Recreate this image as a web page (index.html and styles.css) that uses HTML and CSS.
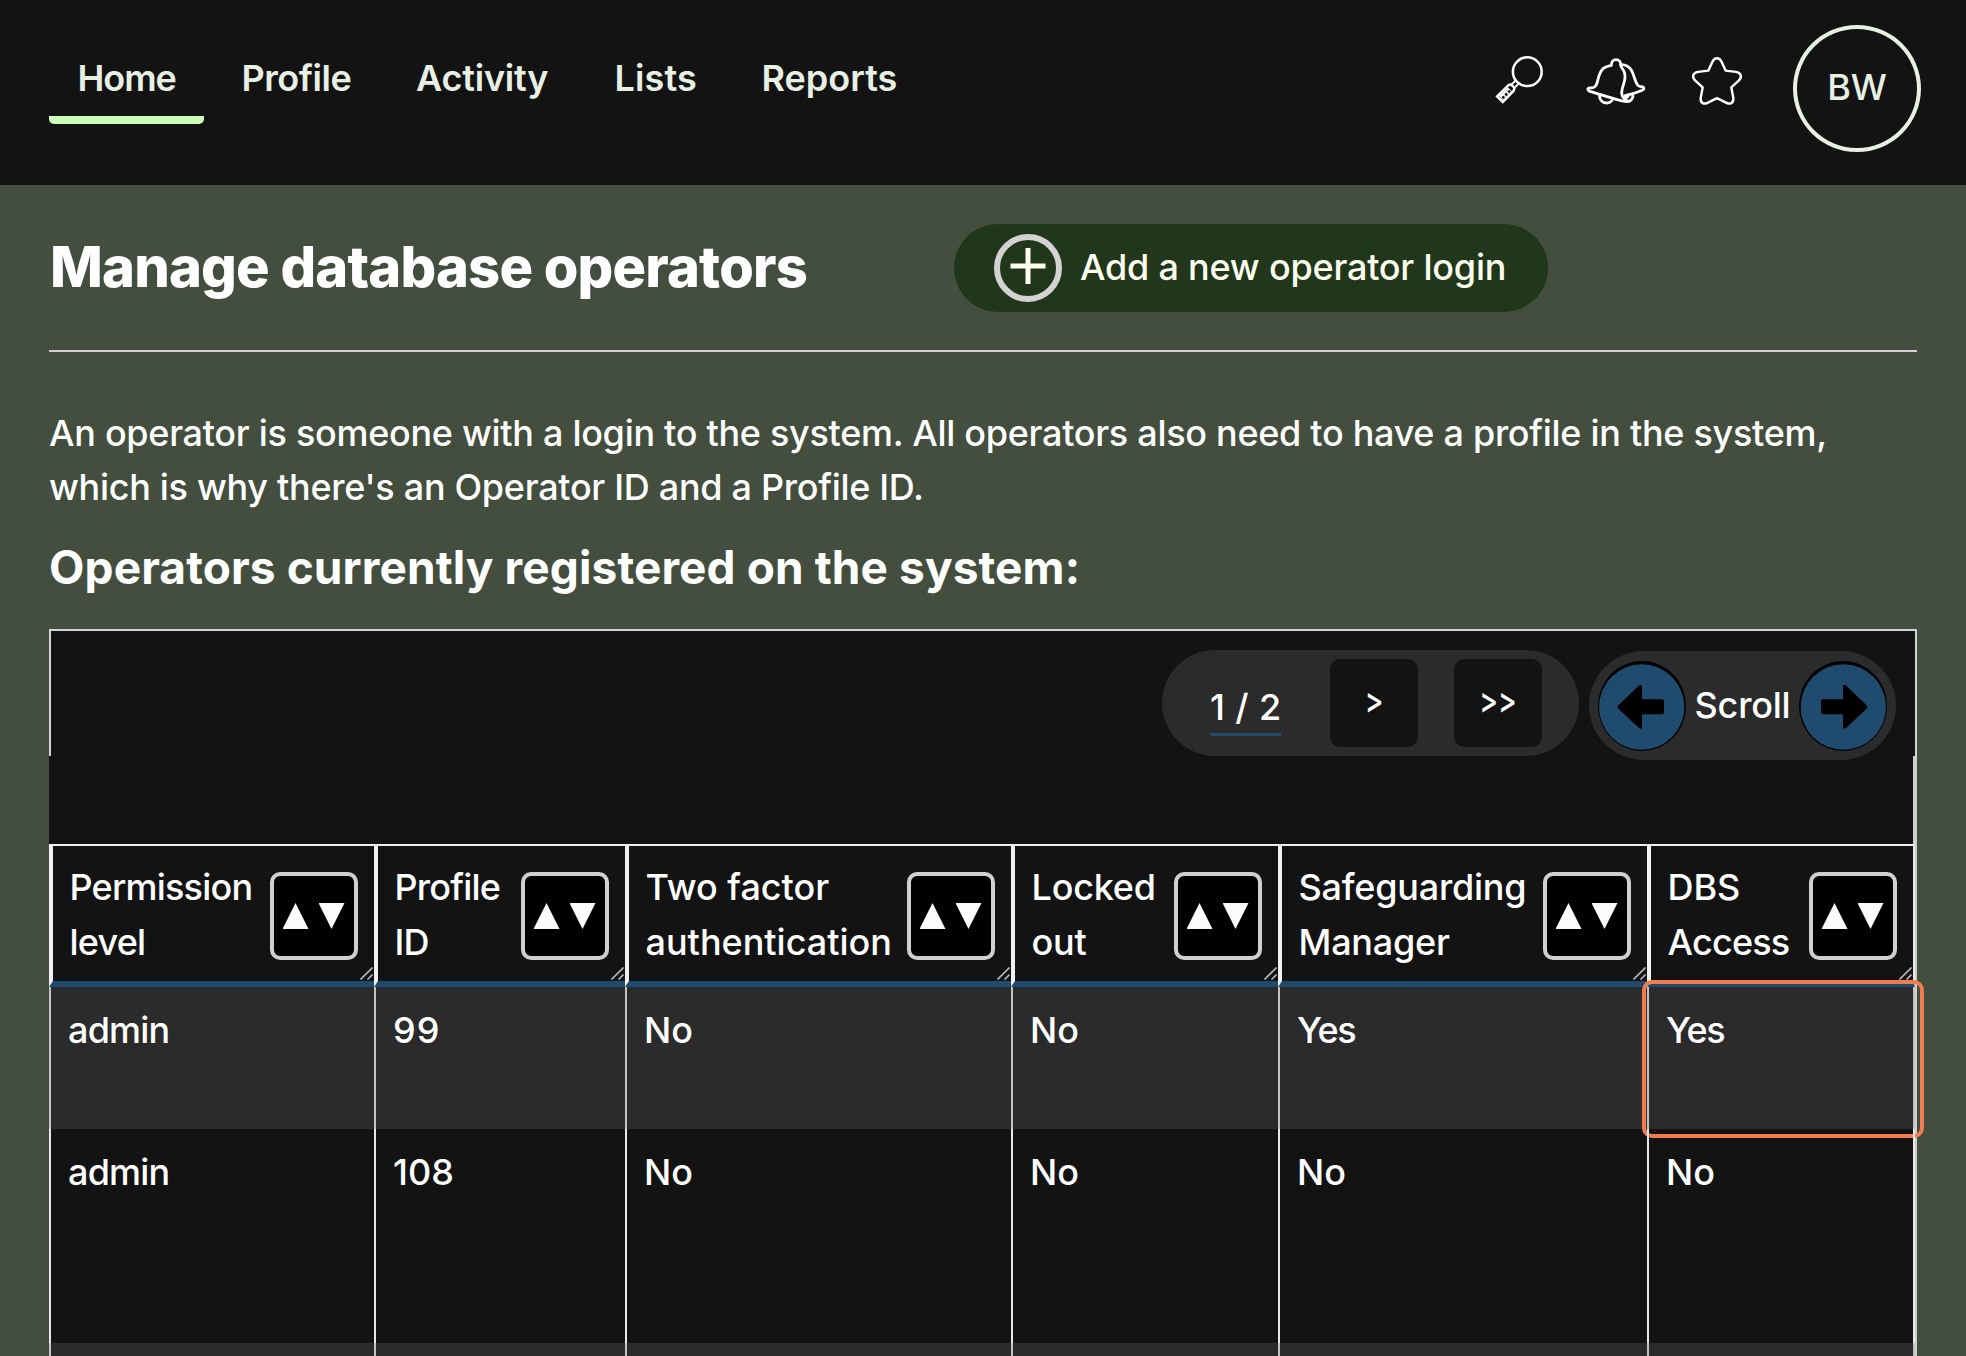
FILE: index.html
```html
<!DOCTYPE html>
<html lang="en">
<head>
<meta charset="utf-8">
<title>Manage database operators</title>
<link rel="stylesheet" href="styles.css">
</head>
<body>
<header class="topbar">
  <nav class="nav">
    <a class="tab tab-active t-home">Home</a>
    <a class="tab t-wide">Profile</a>
    <a class="tab t-activity">Activity</a>
    <a class="tab t-lists">Lists</a>
    <a class="tab">Reports</a>
  </nav>
  <div class="tools">
    <svg class="icon icon-search" viewBox="0 0 52 60" fill="none" stroke="#fff" stroke-width="2.5">
      <circle cx="33.3" cy="19.7" r="14.4"/>
      <path d="M3.2 44.4 L14.8 32.8 L17 32.4 L20.5 36 L19.6 38.9 L8.8 49.9 Z"/>
      <path d="M18 32.2 L22 28 M21.2 35.2 L25 31.2" stroke-width="1.9"/>
      <path d="M7 46 L15.8 37.2" stroke-width="5.6"/>
      <path d="M9.3 43.5 l1.8 1.8 l-1.8 1.8 l-1.8 -1.8 Z M12.2 40.6 l1.8 1.8 l-1.8 1.8 l-1.8 -1.8 Z M15.1 37.7 l1.8 1.8 l-1.8 1.8 l-1.8 -1.8 Z" fill="#131313" stroke="none"/>
    </svg>
    <svg class="icon icon-bell" viewBox="0 0 62 60" fill="none" stroke="#fff" stroke-width="2.8" stroke-linecap="round" stroke-linejoin="round">
      <path d="M26.3 13.4 C26.3 9.8 28.2 7.7 31 7.7 C34 7.7 35.8 9.8 35.8 12.7 C35.4 15.5 38 16.4 39.3 20 C41.6 26 38.6 31.5 37.3 36.5 C36.2 41 36.4 43.5 38.3 45.5 C39.5 47 41.2 47.8 42.3 49.6 C37 49.7 30 46.8 22 44.6 L5 39.4 C2 38.2 2.3 35.8 5.2 35.9 C9.5 36 11 34.5 12.2 30.5 C13.6 25.5 14 21.5 17 17.8 C19.3 15 22.5 14.3 26.3 13.4 Z"/>
      <path d="M35.6 12.6 C40 12.4 44 14.4 46.3 18 C49.3 23 49.5 29 52.6 33 C54.2 35 56.3 34.2 58 35 C59.5 36 59 37.6 57.3 38.3 C51.5 40.8 46 42.6 40 43.7"/>
      <path d="M14.4 42.6 C14.3 48 17.5 51 21.5 51 C24.6 51 26.8 49.6 28 46.8 M47.6 41.9 C48.8 45 46.5 49.4 42.3 49.6 M39.3 45.7 C41 46.2 43 45.5 43.7 42.9"/>
    </svg>
    <svg class="icon icon-star" viewBox="0 0 54 60" fill="none" stroke="#fff" stroke-width="2.4" stroke-linejoin="round">
      <path d="M27 6.3 C29 6.3 30.6 7.7 31.7 10 L35.6 18.6 L46 19.9 C51.4 20.9 52.4 25 48.7 28.6 L41.3 35.3 L43.3 46 C43.8 50.8 40.4 52.7 36.5 50.8 L27 46.1 L17.5 50.8 C13.6 52.7 10.2 50.8 10.7 46 L12.7 35.3 L5.3 28.6 C1.6 25 2.6 20.9 8 19.9 L18.4 18.6 L22.3 10 C23.4 7.7 25 6.3 27 6.3 Z"/>
    </svg>
    <div class="avatar">BW</div>
  </div>
</header>

<main class="page">
  <div class="title-row">
    <h1>Manage database operators</h1>
    <button class="add">
      <span class="ring"><svg class="plus" viewBox="0 0 36 36" stroke="#fffff0" stroke-width="5"><path d="M18 0V36M0.5 18H35.5"/></svg></span>
      <span class="add-text">Add a new operator login</span>
    </button>
  </div>
  <hr>
  <p class="intro">An operator is someone with a login to the system. All operators also need to have a profile in the system,<br>which is why there's an Operator ID and a Profile ID.</p>
  <h2>Operators currently registered on the system:</h2>

  <div class="toolbar">
    <div class="pager">
      <span class="count">1 / 2</span>
      <button class="page-btn"><span class="chev">&gt;</span></button>
      <button class="page-btn"><span class="chev">&gt;&gt;</span></button>
    </div>
    <div class="scroll">
      <button class="disc"><svg viewBox="0 0 88 90"><circle cx="43.7" cy="46" r="42.7" fill="#1e4b6e"/><path d="M20.7 44 L41 24.5 Q44 22.5 44 26 V38.3 H64 Q66 38.3 66 40.3 V51.3 Q66 53.3 64 53.3 H44 V65.5 Q44 69 41 67 L20.7 48 Q18.5 46 20.7 44 Z"/></svg></button>
      <span class="scroll-text">Scroll</span>
      <button class="disc"><svg viewBox="0 0 88 90"><circle cx="44.3" cy="46" r="42.7" fill="#1e4b6e"/><path d="M67.3 44 L47 24.5 Q44 22.5 44 26 V38.3 H24 Q22 38.3 22 40.3 V51.3 Q22 53.3 24 53.3 H44 V65.5 Q44 69 47 67 L67.3 48 Q69.5 46 67.3 44 Z"/></svg></button>
    </div>
  </div>
  <div class="spacer"></div>

  <div class="grid">
    <div class="row head">
      <div class="cell"><span class="tighter">Permission<br>level</span><button class="sort"><i class="up"></i><i class="down"></i></button><svg class="grip" viewBox="0 0 13 13"><path d="M0.5 12.5L12.5 0.5M7.5 12.5L12.5 7.5"/></svg></div>
      <div class="cell"><span class="tighter">Profile<br>ID</span><button class="sort"><i class="up"></i><i class="down"></i></button><svg class="grip" viewBox="0 0 13 13"><path d="M0.5 12.5L12.5 0.5M7.5 12.5L12.5 7.5"/></svg></div>
      <div class="cell"><span>Two factor<br>authentication</span><button class="sort"><i class="up"></i><i class="down"></i></button><svg class="grip" viewBox="0 0 13 13"><path d="M0.5 12.5L12.5 0.5M7.5 12.5L12.5 7.5"/></svg></div>
      <div class="cell"><span class="tight">Locked<br>out</span><button class="sort"><i class="up"></i><i class="down"></i></button><svg class="grip" viewBox="0 0 13 13"><path d="M0.5 12.5L12.5 0.5M7.5 12.5L12.5 7.5"/></svg></div>
      <div class="cell"><span class="tight">Safeguarding<br>Manager</span><button class="sort"><i class="up"></i><i class="down"></i></button><svg class="grip" viewBox="0 0 13 13"><path d="M0.5 12.5L12.5 0.5M7.5 12.5L12.5 7.5"/></svg></div>
      <div class="cell"><span>DBS<br><span class="tighter">Access</span></span><button class="sort"><i class="up"></i><i class="down"></i></button><svg class="grip" viewBox="0 0 13 13"><path d="M0.5 12.5L12.5 0.5M7.5 12.5L12.5 7.5"/></svg></div>
    </div>
    <div class="row body alt">
      <div class="cell tighter">admin</div><div class="cell looser">99</div><div class="cell">No</div><div class="cell">No</div><div class="cell yes">Yes</div><div class="cell yes focus">Yes</div>
    </div>
    <div class="row body tall">
      <div class="cell tighter">admin</div><div class="cell">108</div><div class="cell">No</div><div class="cell">No</div><div class="cell">No</div><div class="cell">No</div>
    </div>
    <div class="row body alt last">
      <div class="cell"></div><div class="cell"></div><div class="cell"></div><div class="cell"></div><div class="cell"></div><div class="cell"></div>
    </div>
  </div>
</main>
</body>
</html>
```

FILE: styles.css
```css
* { box-sizing: border-box; margin: 0; padding: 0; }
body {
  height: 1356px;
  overflow: hidden;
  background: #434e3e;
  color: #fff;
  font: 450 36px/54px Inter, "Liberation Sans", sans-serif;
}
button { border: 0; color: inherit; font: inherit; }
svg { display: block; }

/* Top bar */
.topbar {
  display: flex;
  justify-content: space-between;
  align-items: flex-start;
  height: 185px;
  padding: 0 45px 0 49px;
  background: #131313;
  color: #e8f0e4;
}
.nav {
  display: grid;
  grid-template-columns: 164px 174.5px 198.5px 147px auto;
  padding-top: 51px;
}
.tab { padding: 0 0 11px 28.5px; font-weight: 600; white-space: nowrap; }
.tab-active { width: 155px; border-bottom: 8px solid #ceffb9; border-radius: 0 0 5px 5px; }
.t-home { letter-spacing: -0.0285em; }
.t-wide { letter-spacing: -0.012em; }
.t-activity { letter-spacing: -0.006em; }
.t-lists { letter-spacing: 0.0044em; }
.tools { display: flex; align-items: flex-start; padding-top: 25px; }
.icon { height: 60px; margin-top: 27px; }
.icon-search { width: 52px; margin-right: 39px; }
.icon-bell { width: 62px; margin-right: 43px; }
.icon-star { width: 54px; margin-right: 49px; }
.avatar {
  width: 128px;
  height: 127px;
  border: 4px solid #e8f0e4;
  border-radius: 50%;
  line-height: 117px;
  text-align: center;
}

/* Page heading */
.page { padding: 39px 49px 0; }
.title-row { display: flex; align-items: center; height: 88px; }
h1 {
  width: 905px;
  padding: 0 0 3px 1px;
  font-size: 56px;
  font-weight: 800;
  letter-spacing: -0.0142em;
  line-height: 66px;
}
.add {
  display: flex;
  align-items: center;
  width: 594px;
  height: 88px;
  padding-left: 40px;
  border-radius: 44px;
  background: #21371b;
  color: #fffff0;
}
.ring {
  display: flex;
  justify-content: center;
  width: 68px;
  height: 68px;
  margin-right: 18px;
  padding-top: 8px;
  border: 6px solid #d3d3d3;
  border-radius: 50%;
}
.plus { width: 36px; height: 36px; }
.add-text { padding-bottom: 2px; letter-spacing: -0.006em; }
hr { height: 2px; margin-top: 38px; border: 0; background: #d3d0d3; }
.intro { margin-top: 54px; letter-spacing: -0.0082em; white-space: nowrap; }
h2 { margin-top: 26px; font-size: 46px; font-weight: 700; letter-spacing: 0.0022em; line-height: 54px; }

/* Table controls */
.toolbar {
  position: relative;
  z-index: 1;
  display: flex;
  justify-content: flex-end;
  align-items: flex-start;
  gap: 10px;
  height: 127px;
  margin-top: 35px;
  padding-right: 19px;
  border: 2px solid #d3d3d3;
  border-bottom: 0;
  background: #131313;
}
.pager {
  display: flex;
  align-items: flex-start;
  width: 417px;
  height: 106px;
  margin-top: 19px;
  padding-left: 48px;
  border-radius: 53px;
  background: #2b2b2b;
}
.count {
  width: 71px;
  height: 55px;
  margin: 31px 49px 0 0;
  border-bottom: 3px solid #1e4a6d;
  letter-spacing: 0.01em;
  line-height: 52px;
  white-space: nowrap;
}
.page-btn {
  width: 88px;
  height: 88px;
  margin: 9px 36px 0 0;
  border-radius: 10px;
  background: #131313;
  font-weight: 550;
  line-height: 80px;
}
.chev { display: inline-block; padding-bottom: 6px; transform: scaleX(0.78); }
.scroll {
  display: flex;
  justify-content: space-between;
  width: 307px;
  height: 109px;
  margin-top: 20px;
  padding: 10px 9px;
  border-radius: 55px;
  background: #2b2b2b;
}
.disc { width: 88px; height: 90px; border-radius: 50%; background: #000; overflow: hidden; }
.scroll-text { padding-top: 17px; letter-spacing: -0.006em; }
.spacer { height: 88px; border-right: 4px solid #d0d0d0; background: #131313; }

/* Table */
.grid { border-right: 2px solid #d0d0d0; background: #131313; }
.row { display: grid; grid-template-columns: 325px 251px 386px 267px 369px 268px; }
.cell { position: relative; }
.cell:last-child { border-right: 2px solid #e8e8e8; }
.head .cell {
  display: flex;
  justify-content: space-between;
  align-items: flex-start;
  height: 143px;
  padding: 14px 16.5px 0;
  border-top: 2px solid #f2f0f2;
  border-left: 4px solid #f2f0f2;
  border-bottom: 6px solid #1e4a6d;
  line-height: 55px;
}
.sort {
  display: flex;
  justify-content: center;
  gap: 10px;
  flex: none;
  width: 88px;
  height: 88px;
  margin-top: 12px;
  padding-top: 27px;
  border: 4px solid #d0d0d0;
  border-radius: 10px;
  background: #000;
}
.up, .down { width: 26px; height: 26px; background: #fcfcfc; }
.up { clip-path: polygon(50% 0, 100% 100%, 0 100%); }
.down { clip-path: polygon(0 0, 100% 0, 50% 100%); }
.grip { position: absolute; right: 1px; bottom: 1px; width: 13px; height: 13px; stroke: #b4b4b4; stroke-width: 1.6; }
.body .cell { height: 142px; padding: 16px 0 0 17px; border-left: 2px solid #e8e8e8; }
.alt { background: #2b2b2b; }
.body.alt .cell { border-color: #c4c4c4; }
.tall .cell { height: 214px; }
.body.last .cell { height: 13px; padding: 0; }
.focus::after {
  content: "";
  position: absolute;
  inset: -7px -11px -9px -7px;
  border: 4px solid #f07c50;
  border-radius: 10px;
}
.tight { letter-spacing: -0.006em; }
.tighter { letter-spacing: -0.022em; }
.looser { letter-spacing: 0.03em; }
.yes { letter-spacing: -0.04em; }
```
